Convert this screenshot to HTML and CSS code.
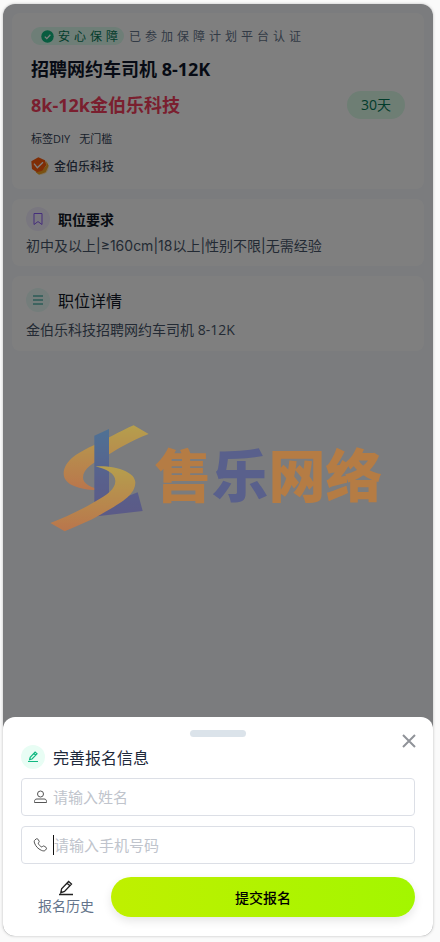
FILE: index.html
```html
<!DOCTYPE html>
<html lang="zh-CN">
<head>
  <meta charset="UTF-8">
  <meta name="viewport" content="width=device-width, initial-scale=1.0">
  <title>招聘网约车司机 8-12K</title>
  <link rel="stylesheet" href="styles.css">
</head>
<body>
  <div class="phone">
    <main class="page">
      <section class="card job">
        <div class="guard">
          <span class="guard-pill">
            <svg width="13" height="13" viewBox="0 0 13 13"><circle cx="6.5" cy="6.5" r="6.2" fill="#10b981"/><path d="M3.8 6.6l2 2 3.6-3.8" fill="none" stroke="#fff" stroke-width="1.3"/></svg>
            安心保障
          </span>
          <span class="guard-text">已参加保障计划平台认证</span>
        </div>
        <h1>招聘网约车司机 8-12K</h1>
        <div class="price-row">
          <span class="price">8k-12k金伯乐科技</span>
          <span class="days">30天</span>
        </div>
        <div class="tags"><span>标签DIY</span><span>无门槛</span></div>
        <div class="company">
          <svg width="18" height="18" viewBox="0 0 54 54">
            <circle cx="31" cy="31" r="22" fill="#fde2b8"/>
            <path d="M46 12l7 14-9 20-20 7-10-7 20-6 12-14z" fill="#f5a524"/>
            <path d="M22 1l20 9 4 14-12 17-16 5L3 36 1 13z" fill="#ff5a0a"/>
            <path d="M9 20l10 12 17-16" fill="none" stroke="#fff" stroke-width="4"/>
          </svg>
          <span>金伯乐科技</span>
        </div>
      </section>

      <section class="card">
        <div class="card-head">
          <span class="icon purple">
            <svg width="14" height="14" viewBox="0 0 14 14"><path d="M3 1.5h8v11L7 9.6l-4 2.9z"/></svg>
          </span>
          <h2>职位要求</h2>
        </div>
        <p class="limits">初中及以上|≥160cm|18以上|性别不限|无需经验</p>
      </section>

      <section class="card detail">
        <div class="card-head">
          <span class="icon teal">
            <svg width="14" height="14" viewBox="0 0 14 14"><path d="M2 3h10M2 7h10M2 11h10"/></svg>
          </span>
          <h2>职位详情</h2>
        </div>
        <p>金伯乐科技招聘网约车司机 8-12K</p>
      </section>
    </main>

    <div class="overlay"></div>

    <div class="watermark">
      <svg width="99" height="107" viewBox="29 44 297 321">
        <defs>
          <linearGradient id="gold" x1="0" y1="0" x2="0" y2="1">
            <stop offset="0" stop-color="#f0c21e"/>
            <stop offset="1" stop-color="#f8701c"/>
          </linearGradient>
          <linearGradient id="blue" x1="0" y1="0" x2="0" y2="1">
            <stop offset="0" stop-color="#2468ac"/>
            <stop offset=".6" stop-color="#38459a"/>
            <stop offset="1" stop-color="#3d3a90"/>
          </linearGradient>
        </defs>
        <path d="M280 45L325 71C272 91 232 116 206 132C160 157 128 174 128 202C128 219 150 232 188 240C110 240 70 220 70 190C70 150 118 124 162 104C194 89 238 63 280 45z" fill="url(#gold)"/>
        <path d="M162 76L206 56V280L292 246L307 302L170 318L162 312z" fill="url(#blue)"/>
        <path d="M165 168C235 165 285 188 285 216C285 258 232 283 180 313C146 333 108 347 73 363L30 338C72 322 116 302 162 275C202 253 225 236 225 212C225 190 200 177 165 168z" fill="url(#gold)"/>
      </svg>
      <span class="brand">售<b>乐</b>网络</span>
    </div>

    <form class="sheet" role="dialog" aria-labelledby="sheet-title">
      <div class="handle"></div>
      <button class="close" type="button" aria-label="关闭">
        <svg width="14" height="14" viewBox="0 0 14 14"><path d="M1 1l12 12M13 1L1 13"/></svg>
      </button>
      <div class="sheet-head">
        <span class="icon green">
          <svg width="12" height="12" viewBox="0 0 12 12"><path d="M1 10.5h10M2.6 8.7l.6-2.4 4.9-5.2L10 2.8 5 8zM6.9 2.5l1.8 1.6" stroke-width="1.2"/></svg>
        </span>
        <h2 id="sheet-title">完善报名信息</h2>
      </div>
      <label class="field">
        <svg width="15" height="14" viewBox="0 0 15 14"><circle cx="7.5" cy="4" r="3"/><path d="M1.500 12.500v-1c0-1.800 1-2.500 2.500-2.500h7c1.500 0 2.500.7 2.500 2.500v1z"/></svg>
        <input type="text" placeholder="请输入姓名" aria-label="姓名">
      </label>
      <label class="field active">
        <svg width="15" height="14" viewBox="0 0 15 14"><path d="M2 1.9l1.4-1.1c.5-.3 1-.2 1.4.3l1.300 2c.3.5.2 1-.2 1.400l-.8.7c.8 1.800 2 3 3.800 3.900l.8-.8c.4-.4.9-.5 1.400-.2l2 1.300c.5.3.6.9.3 1.400l-.9 1.300c-.7 1-2.200 1.100-4.200.2C5 10.800 2.600 8.200 1.500 5c-.5-1.500-.3-2.500.5-3.100z"/></svg>
        <input type="tel" placeholder="请输入手机号码" aria-label="手机号码">
      </label>
      <div class="actions">
        <a class="history" href="#">
          <svg width="16" height="16" viewBox="0 0 16 16"><path d="M1 14.500h14M2.800 12.700l.8-3.900 7-7.300 2.900 2.500-7 7.400zM9.200 3.200l2.700 2.500M3 11.800l1 .9"/></svg>
          报名历史
        </a>
        <button class="submit" type="submit">提交报名</button>
      </div>
    </form>
  </div>
</body>
</html>
```
FILE: styles.css
```css
* {
  box-sizing: border-box;
}
body {
  margin: 0;
  padding: 4px 7px 6px 3px;
  background-color: #fafafa;
  font-family: "Open Sans", "Noto Sans CJK SC", sans-serif;
  font-size: 14px;
  color: #111827;
}
h1, h2, p {
  margin: 0;
}
svg {
  flex: none;
}
.phone {
  position: relative;
  display: flex;
  flex-direction: column;
  min-height: calc(100vh - 10px);
  border-radius: 12px;
  overflow: hidden;
  background-color: #f6f8fc;
  box-shadow: 0 0 3px rgba(0, 0, 0, 0.25);
}
.page {
  flex: 1;
  display: flex;
  flex-direction: column;
  gap: 10px;
  padding: 9px;
}
.card {
  padding: 8px 14px 10px;
  border-radius: 8px;
  background-color: #fff;
}
.job {
  padding: 14px 19px;
}
.guard {
  display: flex;
  align-items: center;
  gap: 5px;
  height: 18px;
  font-size: 12px;
  letter-spacing: 4px;
  color: #64748b;
  white-space: nowrap;
}
.guard-pill {
  display: flex;
  align-items: center;
  gap: 4px;
  height: 18px;
  padding: 0 2px 0 10px;
  border-radius: 9px;
  background-color: #dcfcee;
  color: #047857;
}
h1 {
  margin-top: 12px;
  font-size: 18px;
  line-height: 24px;
  color: #0f172a;
}
.price-row {
  display: flex;
  align-items: center;
  justify-content: space-between;
  margin-top: 10px;
}
.price {
  font-size: 18px;
  line-height: 24px;
  font-weight: bold;
  color: #f43f5e;
}
.days {
  padding: 0 14px;
  border-radius: 14px;
  line-height: 28px;
  background-color: #dcfce9;
  color: #047857;
}
.tags {
  display: flex;
  gap: 9px;
  margin-top: 12px;
  font-size: 11px;
  line-height: 16px;
  color: #334155;
}
.company {
  display: flex;
  align-items: center;
  gap: 5px;
  height: 18px;
  margin-top: 10px;
  font-size: 12px;
  font-weight: 500;
  color: #334155;
}
.card-head, .sheet-head {
  display: flex;
  align-items: center;
  gap: 8px;
  height: 24px;
}
.card-head h2 {
  font-size: 14px;
}
.card p {
  margin-top: 5px;
  line-height: 20px;
  color: #475569;
}
.limits {
  font-family: Inter, "Noto Sans CJK SC", sans-serif;
}
.detail {
  padding: 12px 14px 11px;
}
.detail .card-head h2, .sheet-head h2 {
  font-size: 16px;
  font-weight: normal;
}
.card.detail p {
  margin-top: 8px;
}
.icon {
  display: flex;
  align-items: center;
  justify-content: center;
  width: 24px;
  height: 24px;
  border-radius: 50%;
}
.icon svg, .field svg, .history svg, .close svg {
  fill: none;
  stroke: currentColor;
}
.purple {
  background-color: #f3eeff;
  color: #8b5cf6;
}
.teal {
  background-color: #e8fbf7;
  color: #0d9488;
}
.green {
  background-color: #e8fdf4;
  color: #10b981;
}
.overlay {
  position: absolute;
  inset: 0;
  background-color: rgba(0, 0, 0, 0.5);
}
.watermark {
  position: absolute;
  top: 45%;
  left: 0;
  right: 0;
  display: flex;
  align-items: center;
  justify-content: center;
  gap: 6px;
  padding-top: 2px;
  padding-right: 4px;
  opacity: 0.5;
}
.brand {
  padding-bottom: 14px;
  font-family: "Noto Sans CJK SC", sans-serif;
  font-size: 57px;
  line-height: 64px;
  font-weight: 900;
  color: #f07c0c;
}
.brand b {
  font-weight: 900;
  color: #38459a;
}
.sheet {
  position: relative;
  display: flex;
  flex-direction: column;
  padding: 13px 18px 19px;
  border-radius: 12px 12px 0 0;
  background-color: #fff;
}
.handle {
  align-self: center;
  width: 56px;
  height: 7px;
  border-radius: 4px;
  background-color: #dbe3ea;
}
.close {
  position: absolute;
  top: 17px;
  right: 17px;
  display: flex;
  padding: 0;
  border: none;
  background: none;
  color: #909399;
  cursor: pointer;
}
.close svg {
  stroke-width: 2;
}
.sheet-head {
  margin-top: 8px;
  margin-bottom: 9px;
}
.sheet-head h2 {
  color: #1e293b;
}
.field {
  display: flex;
  align-items: center;
  height: 38px;
  padding: 0 11px;
  border: 1px solid #dcdfe6;
  border-radius: 4px;
  color: #555;
}
.field + .field {
  margin-top: 10px;
}
.field input {
  flex: 1;
  min-width: 0;
  margin-left: 5px;
  padding: 0;
  border: none;
  outline: none;
  background: none;
  font-family: inherit;
  font-size: 15px;
  color: #303133;
}
.field input::placeholder {
  color: #c0c4cc;
}
/* text cursor of the field in use */
.field.active input {
  height: 20px;
  border-left: 1px solid #111;
}
.actions {
  display: flex;
  align-items: center;
  margin-top: 13px;
}
.history {
  display: flex;
  flex-direction: column;
  align-items: center;
  width: 90px;
  padding-top: 2px;
  line-height: 20px;
  color: #64748b;
  text-decoration: none;
}
.history svg {
  color: #222;
  stroke-width: 1.3;
}
.submit {
  flex: 1;
  height: 40px;
  border: none;
  border-radius: 20px;
  background: linear-gradient(90deg, #bff000, #a3f600);
  box-shadow: 0 4px 10px rgba(0, 0, 0, 0.1);
  font-family: inherit;
  font-size: 14px;
  font-weight: 500;
  color: #000;
  cursor: pointer;
}
```
